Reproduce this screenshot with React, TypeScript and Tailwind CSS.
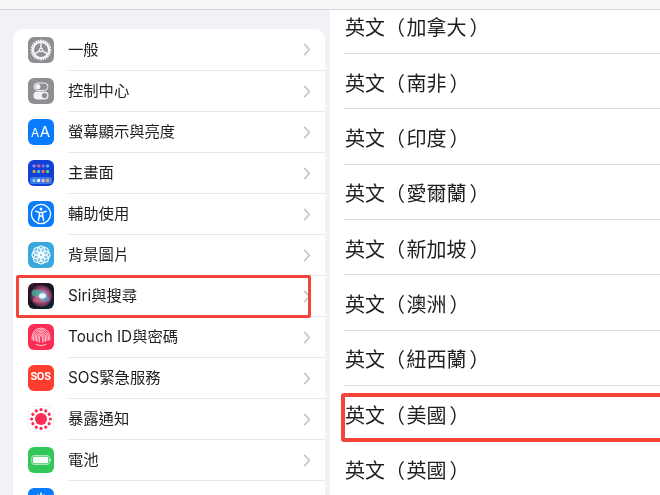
import { ReactNode } from "react";

const fontStack = {
  fontFamily: '"Inter", "Noto Sans CJK TC", sans-serif',
};

function GearIcon() {
  const teeth = Array.from({ length: 24 }, (_, i) => i * 15);
  return (
    <svg viewBox="0 0 26 26" className="h-[26px] w-[26px]">
      <rect width="26" height="26" rx="6" fill="#8e8e93" />
      {teeth.map((a) => (
        <rect key={a} x="12.2" y="2.6" width="1.6" height="3.2" fill="#f6f6f8" transform={`rotate(${a} 13 13)`} />
      ))}
      <circle cx="13" cy="13" r="8" fill="none" stroke="#f6f6f8" strokeWidth="2" />
      <circle cx="13" cy="13" r="1.6" fill="none" stroke="#f6f6f8" strokeWidth="1.2" />
      <path d="M13 11.4V6M11.6 13.8 7 16.6M14.4 13.8 19 16.6" stroke="#f6f6f8" strokeWidth="1.4" />
    </svg>
  );
}

function SwitchIcon() {
  return (
    <svg viewBox="0 0 26 26" className="h-[26px] w-[26px]">
      <rect width="26" height="26" rx="6" fill="#8e8e93" />
      <rect x="6" y="5" width="14" height="7.4" rx="3.7" fill="none" stroke="#f2f2f4" strokeWidth="1" />
      <circle cx="9.8" cy="8.7" r="2.6" fill="#f2f2f4" />
      <rect x="5.5" y="13.6" width="15" height="8" rx="4" fill="#f2f2f4" />
      <circle cx="16.6" cy="17.6" r="2.7" fill="#8e8e93" />
    </svg>
  );
}

function TextSizeIcon() {
  return (
    <div className="flex h-[26px] w-[26px] items-end justify-center gap-[0.5px] rounded-[6px] bg-[#0a7bfa] pb-[6px] leading-none text-white">
      <span className="text-[12px] leading-none">A</span>
      <span className="text-[15px] leading-none">A</span>
    </div>
  );
}

function HomeIcon() {
  const top = ["#9a8cf0", "#e35d8e", "#7f6ee6", "#5fb0e8"];
  const mid = ["#e8a23c", "#48c0d8", "#e86a5a", "#65c965"];
  const dock = ["#7fd0f0", "#ffffff", "#f0c0d0", "#f0a860"];
  return (
    <svg viewBox="0 0 26 26" className="h-[26px] w-[26px]">
      <rect width="26" height="26" rx="6" fill="#1040d8" />
      <rect x="2" y="17" width="22" height="7" rx="2.5" fill="#3f7be8" />
      {top.map((c, i) => (
        <rect key={i} x={4.6 + i * 4.5} y="4.4" width="3" height="3" rx="0.8" fill={c} />
      ))}
      {mid.map((c, i) => (
        <rect key={i} x={4.6 + i * 4.5} y="10" width="3" height="3" rx="0.8" fill={c} />
      ))}
      {dock.map((c, i) => (
        <rect key={i} x={4.6 + i * 4.5} y="19" width="3" height="3" rx="0.8" fill={c} />
      ))}
    </svg>
  );
}

function AccessibilityIcon() {
  return (
    <svg viewBox="0 0 26 26" className="h-[26px] w-[26px]">
      <rect width="26" height="26" rx="6" fill="#0a7bfa" />
      <circle cx="13" cy="13" r="9.6" fill="none" stroke="#fff" strokeWidth="1.3" />
      <circle cx="13" cy="7.9" r="1.5" fill="#fff" />
      <path d="M7.8 10.3 11.4 11.4V14.6L10.4 19.4M18.2 10.3 14.6 11.4V14.6L15.6 19.4M11.4 11.4H14.6M11.6 15H14.4" fill="none" stroke="#fff" strokeWidth="1.5" strokeLinecap="round" strokeLinejoin="round" />
    </svg>
  );
}

function FlowerIcon() {
  const petals = Array.from({ length: 8 }, (_, i) => i * 45);
  return (
    <svg viewBox="0 0 26 26" className="h-[26px] w-[26px]">
      <rect width="26" height="26" rx="6" fill="#38a9dc" />
      {petals.map((a) => (
        <circle key={a} cx="13" cy="7.8" r="3.9" fill="#fff" fillOpacity="0.22" stroke="#fff" strokeWidth="1" transform={`rotate(${a} 13 13)`} />
      ))}
      <circle cx="13" cy="13" r="3" fill="none" stroke="#fff" strokeWidth="1" />
    </svg>
  );
}

function SiriIcon() {
  return (
    <svg viewBox="0 0 26 26" className="h-[26px] w-[26px]">
      <defs>
        <radialGradient id="siriGlow" cx="0.55" cy="0.5" r="0.5">
          <stop offset="0" stopColor="#eef7fb" />
          <stop offset="0.28" stopColor="#86b8d8" />
          <stop offset="0.6" stopColor="#a8507e" />
          <stop offset="1" stopColor="#4a2440" />
        </radialGradient>
        <linearGradient id="siriBase" x1="0" y1="0" x2="1" y2="1">
          <stop offset="0" stopColor="#3a1030" />
          <stop offset="0.5" stopColor="#15131f" />
          <stop offset="1" stopColor="#0c2a34" />
        </linearGradient>
      </defs>
      <rect width="26" height="26" rx="6" fill="url(#siriBase)" />
      <circle cx="13" cy="13" r="11" fill="url(#siriGlow)" />
      <ellipse cx="8" cy="10" rx="4.4" ry="3.4" fill="#3fb49a" fillOpacity="0.75" />
      <ellipse cx="9" cy="17" rx="4" ry="2.8" fill="#d85a78" fillOpacity="0.7" />
      <ellipse cx="18" cy="16" rx="3.8" ry="2.6" fill="#4a9ec8" fillOpacity="0.6" />
      <ellipse cx="14.5" cy="13" rx="3.6" ry="2.4" fill="#f2fafc" fillOpacity="0.9" />
    </svg>
  );
}

function FingerprintIcon() {
  const radii = [1.4, 2.9, 4.4, 5.9, 7.4, 8.9];
  return (
    <svg viewBox="0 0 26 26" className="h-[26px] w-[26px]">
      <rect width="26" height="26" rx="6" fill="#fb2d55" />
      {radii.map((r) => (
        <path key={r} d={`M${13 - r} ${18.5 - r * 0.3}V13A${r} ${r} 0 0 1 ${13 + r} 13V${18.5 - r * 0.3}`} fill="none" stroke="#fcd5de" strokeWidth="0.9" strokeLinecap="round" />
      ))}
      <path d="M8 20.5Q13 23 18 20.5" fill="none" stroke="#fcd5de" strokeWidth="0.9" strokeLinecap="round" />
    </svg>
  );
}

function SosIcon() {
  return (
    <div className="flex h-[26px] w-[26px] items-center justify-center rounded-[6px] bg-[#fc3d30] text-[11px] font-bold tracking-[-0.3px] text-white" style={{ fontFamily: '"Roboto", sans-serif' }}>
      SOS
    </div>
  );
}

function ExposureIcon() {
  const dots = Array.from({ length: 12 }, (_, i) => i * 30);
  return (
    <svg viewBox="0 0 26 26" className="h-[26px] w-[26px]">
      <rect x="0.25" y="0.25" width="25.5" height="25.5" rx="6" fill="#fff" stroke="#e5e5ea" strokeWidth="0.5" />
      <circle cx="13" cy="13" r="6" fill="#f92d55" />
      {dots.map((a) => (
        <circle key={a} cx="13" cy="3.6" r="1.6" fill="#f92d55" transform={`rotate(${a} 13 13)`} />
      ))}
    </svg>
  );
}

function BatteryIcon() {
  return (
    <svg viewBox="0 0 26 26" className="h-[26px] w-[26px]">
      <rect width="26" height="26" rx="6" fill="#33c75a" />
      <rect x="3.8" y="8.6" width="17.6" height="8.8" rx="2" fill="none" stroke="#d8f4de" strokeWidth="0.8" />
      <rect x="5" y="9.8" width="15.2" height="6.4" rx="1" fill="#f4fbf5" />
      <rect x="22" y="11.6" width="0.9" height="2.8" rx="0.4" fill="#d8f4de" />
    </svg>
  );
}

function PrivacyIcon() {
  return (
    <svg viewBox="0 0 26 26" className="h-[26px] w-[26px]">
      <rect width="26" height="26" rx="6" fill="#0a7bfa" />
      <path d="M10 12V6.5M13 12V4.5M16 12V6.5M8 9.5V14H18V9.5" fill="none" stroke="#fff" strokeWidth="1.5" />
    </svg>
  );
}

const settings: { label: string; icon: ReactNode }[] = [
  { label: "一般", icon: <GearIcon /> },
  { label: "控制中心", icon: <SwitchIcon /> },
  { label: "螢幕顯示與亮度", icon: <TextSizeIcon /> },
  { label: "主畫面", icon: <HomeIcon /> },
  { label: "輔助使用", icon: <AccessibilityIcon /> },
  { label: "背景圖片", icon: <FlowerIcon /> },
  { label: "Siri與搜尋", icon: <SiriIcon /> },
  { label: "Touch ID與密碼", icon: <FingerprintIcon /> },
  { label: "SOS緊急服務", icon: <SosIcon /> },
  { label: "暴露通知", icon: <ExposureIcon /> },
  { label: "電池", icon: <BatteryIcon /> },
  { label: "", icon: <PrivacyIcon /> },
];

const languages = ["加拿大", "南非", "印度", "愛爾蘭", "新加坡", "澳洲", "紐西蘭", "美國", "英國"];

function Chevron() {
  return (
    <svg viewBox="0 0 8 14" className="h-[13px] w-[8px] shrink-0">
      <path d="M1.5 1.5 6.5 7 1.5 12.5" fill="none" stroke="#c4c4c8" strokeWidth="1.7" strokeLinecap="round" strokeLinejoin="round" />
    </svg>
  );
}

export default function App() {
  return (
    <div lang="zh-Hant" className="flex h-[495px] w-[660px] flex-col overflow-hidden bg-white text-[#1e1e20] blur-[0.35px]" style={fontStack}>
      <div className="h-[10px] shrink-0 border-b border-[#d6d6da] bg-[#f7f7f9]" />
      <div className="flex min-h-0 flex-1">
        {/* settings */}
        <div className="relative w-[330px] shrink-0 bg-[#f1f1f6] pl-[13px] pr-[5px] pt-[19px]">
          <div className="overflow-hidden rounded-t-[10px] bg-white">
            {settings.map((s, i) => (
              <div key={i} className="flex h-[41px] items-center pl-[14.5px]">
                <div className="h-[26px] w-[26px] shrink-0">{s.icon}</div>
                <div className={`ml-[14.5px] flex h-full flex-1 items-center pr-[14px] ${i > 0 ? "border-t border-[#e6e6ea]" : ""}`}>
                  <span className="flex-1 pt-[1px] text-[15.3px]">{s.label}</span>
                  {s.label && <Chevron />}
                </div>
              </div>
            ))}
          </div>
          <div className="absolute left-[16px] top-[265px] h-[43px] w-[295px] rounded-[2px] border-[3px] border-[#f4433a]" />
        </div>

        {/* language list */}
        <div className="relative min-w-0 flex-1 overflow-hidden pl-[14px] font-['Noto_Sans_CJK_TC',sans-serif]">
          <div className="-mt-[11.3px] flex flex-col">
            {languages.map((l) => (
              <div key={l} className="flex h-[55.33px] shrink-0 items-center border-b border-[#dcdce0] pt-[3px] text-[20px]">
                <span className="pl-[1px] whitespace-nowrap">
                  英文<span className="mr-[1.5px]">（</span>{l}<span className="ml-[3px]">）</span>
                </span>
              </div>
            ))}
          </div>
          <div className="absolute -right-[6px] left-[11px] top-[383px] h-[49px] rounded-[3px] border-4 border-[#f4433a]" />
        </div>
      </div>
    </div>
  );
}
